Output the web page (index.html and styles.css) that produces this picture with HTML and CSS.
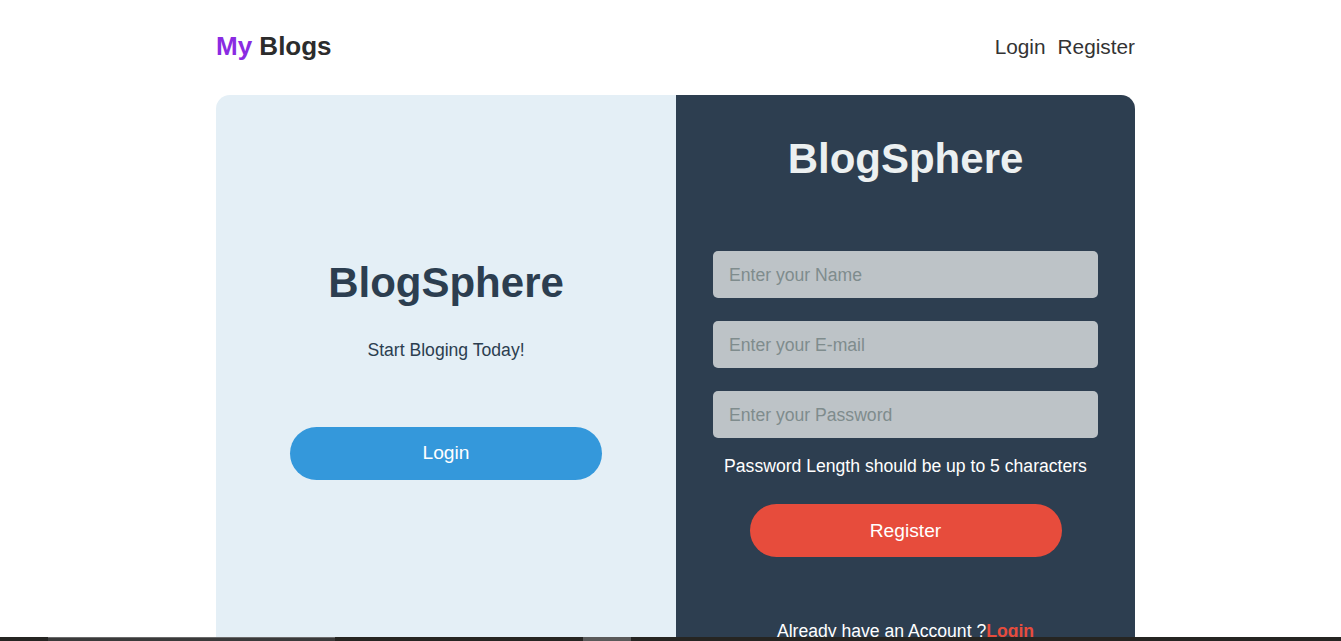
FILE: index.html
```html
<!DOCTYPE html>
<html lang="en">
<head>
<meta charset="utf-8">
<title>My Blogs</title>
<link rel="stylesheet" href="styles.css">
</head>
<body>
<div class="page">
  <header class="header">
    <a class="brand" href="#"><span class="brand-my">My</span> Blogs</a>
    <nav class="nav">
      <a href="#">Login</a>
      <a href="#">Register</a>
    </nav>
  </header>
  <main class="card">
    <section class="panel-left">
      <h1 class="title-dark">BlogSphere</h1>
      <p class="tagline">Start Bloging Today!</p>
      <button class="btn btn-blue">Login</button>
    </section>
    <section class="panel-right">
      <h1 class="title-light">BlogSphere</h1>
      <form class="form">
        <input class="field" type="text" placeholder="Enter your Name">
        <input class="field" type="email" placeholder="Enter your E-mail">
        <input class="field" type="password" placeholder="Enter your Password">
        <p class="hint">Password Length should be up to 5 characters</p>
        <button class="btn btn-red" type="button">Register</button>
      </form>
      <p class="already">Already have an Account ?<a href="#">Login</a></p>
    </section>
  </main>
</div>
<div class="taskbar">
  <span class="tb-a"></span>
  <span class="tb-b"></span>
  <span class="tb-c"></span>
  <span class="tb-d"></span>
</div>
</body>
</html>
```
FILE: styles.css
```css
* { box-sizing: border-box; }
html, body { margin: 0; padding: 0; background: #ffffff; }
body { font-family: "Liberation Sans", Arial, sans-serif; color: #333; overflow: hidden; padding-left: 10px; }

.page { width: 919px; margin: 0 auto; }

.header {
  height: 95px;
  display: flex;
  align-items: center;
  justify-content: space-between;
  padding-bottom: 2px;
}
.brand { font-size: 26px; font-weight: bold; color: #2c2c2c; text-decoration: none; }
.brand-my { color: #8a2be2; }
.nav { display: flex; gap: 12px; }
.nav a { font-size: 20.8px; color: #333; text-decoration: none; }

.card {
  display: flex;
  border-radius: 14px;
  overflow: hidden;
  height: 620px;
}
.panel-left {
  width: 460px;
  background: #e4eff6;
  display: flex;
  flex-direction: column;
  align-items: center;
  padding-top: 164px;
}
.panel-right {
  flex: 1;
  background: #2d3e50;
  display: flex;
  flex-direction: column;
  align-items: center;
  padding-top: 40px;
}
.title-dark, .title-light {
  margin: 0;
  font-size: 42px;
  line-height: 48px;
  font-weight: bold;
}
.title-dark { color: #2c3e50; }
.title-light { color: #ecf0f1; }
.tagline { margin: 33px 0 0; font-size: 17.6px; line-height: 20px; color: #2c3e50; }

.btn {
  width: 312px;
  height: 53px;
  border: none;
  border-radius: 27px;
  color: #fff;
  font-family: inherit;
  font-size: 19.2px;
  padding-top: 2px;
  cursor: pointer;
}
.btn-blue { background: #3498db; margin-top: 67px; padding-top: 0; }
.btn-red { background: #e74c3c; margin-top: 28px; }

.form {
  margin-top: 68px;
  width: 385px;
  display: flex;
  flex-direction: column;
  align-items: center;
}
.field {
  width: 385px;
  height: 47px;
  border: none;
  border-radius: 5px;
  background: #bdc3c7;
  padding: 1px 16px 0;
  font-family: inherit;
  font-size: 17.6px;
  color: #2c3e50;
  margin-bottom: 23px;
  outline: none;
}
.field:last-of-type { margin-bottom: 0; }
.field::placeholder { color: #7f8c8d; }
.hint { margin: 18px 0 0; font-size: 17.6px; line-height: 20px; color: #ffffff; white-space: nowrap; }
.already { margin: 64px 0 0; font-size: 17.6px; line-height: 20px; color: #ffffff; }
.already a { color: #e74c3c; font-weight: bold; text-decoration: none; }

.taskbar {
  position: fixed;
  left: 0; right: 0; bottom: 0;
  height: 4px;
  background: #262522;
  display: flex;
}
.taskbar span { display: block; height: 4px; }
.tb-a { width: 48px; }
.tb-b { width: 287px; background: #3a3a3a; border-top: 1px solid #6a6a6a; }
.tb-c { width: 248px; }
.tb-d { width: 48px; background: #5a5a5a; }
```
